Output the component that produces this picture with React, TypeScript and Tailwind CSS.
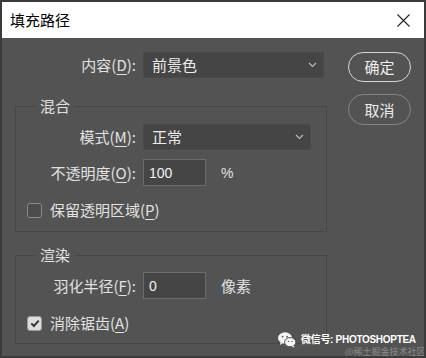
import React from "react";

function Key({ k }: { k: string }) {
  return (
    <>
      (<span className="underline underline-offset-[3px] decoration-1">{k}</span>)
    </>
  );
}

function Chevron() {
  return (
    <svg width="9" height="6" viewBox="0 0 9 6" fill="none">
      <polyline points="1,1 4.5,4.5 8,1" stroke="#bdbdbd" strokeWidth="1.1" />
    </svg>
  );
}

function Select({ value, width }: { value: string; width: string }) {
  return (
    <div
      className={`${width} h-[26px] bg-[#454545] border border-[#4a4a4a] flex items-center justify-between pl-[8px] pr-[6px] text-[#ececec]`}
    >
      <span>{value}</span>
      <Chevron />
    </div>
  );
}

function NumInput({ value }: { value: string }) {
  return (
    <div className="w-[63px] h-[27px] bg-[#454545] border border-[#6c6c6c] flex items-center pl-[5px] text-[#f2f2f2] font-['Liberation_Sans',sans-serif] text-[14px]">
      {value}
    </div>
  );
}

function Check({ checked, children }: { checked?: boolean; children: React.ReactNode }) {
  return (
    <div className="flex items-center h-[20px] pl-[11px]">
      {checked ? (
        <div className="w-[15px] h-[15px] rounded-[3px] bg-[#dedede] border border-[#9a9a9a] flex items-center justify-center">
          <svg width="10" height="9" viewBox="0 0 10 9" fill="none">
            <polyline points="1.3,4.6 3.9,7 8.7,1.6" stroke="#3a3a3a" strokeWidth="2" />
          </svg>
        </div>
      ) : (
        <div className="w-[15px] h-[15px] rounded-[3px] bg-[#4b4b4b] border border-[#8a8a8a]" />
      )}
      <span className="ml-[8px]">{children}</span>
    </div>
  );
}

export default function App() {
  return (
    <div className="w-[426px] h-[358px] border-2 border-[#3b3b3b] bg-[#535353] flex flex-col overflow-hidden relative font-['Noto_Sans_CJK_SC','Noto_Sans',sans-serif] text-[15px] leading-[20px] text-[#e2e2e2]">
      {/* Title bar */}
      <div className="h-[36px] bg-white flex items-center justify-between pl-[8px] pr-[14px] shrink-0">
        <span className="text-black text-[15px]">填充路径</span>
        <svg width="13" height="13" viewBox="0 0 13 13" fill="none">
          <line x1="0.5" y1="0.5" x2="12.5" y2="12.5" stroke="#222" strokeWidth="1.1" />
          <line x1="12.5" y1="0.5" x2="0.5" y2="12.5" stroke="#222" strokeWidth="1.1" />
        </svg>
      </div>

      {/* Body */}
      <div className="flex pt-[14px] pl-[13px]">
        <div className="w-[312px] flex flex-col">
          <div className="flex items-center">
            <div className="w-[122px] text-right pr-[1px]">
              内容<Key k="D" />:
            </div>
            <div className="ml-[6px]">
              <Select value="前景色" width="w-[181px]" />
            </div>
          </div>

          <fieldset className="mt-[18px] border border-[#474747] pb-[11px]">
            <legend className="ml-[20px] px-[4px] leading-[20px]">混合</legend>
            <div className="flex items-center mt-[8px]">
              <div className="w-[121px] text-right pr-[1px]">
                模式<Key k="M" />:
              </div>
              <div className="ml-[6px]">
                <Select value="正常" width="w-[168px]" />
              </div>
            </div>
            <div className="flex items-center mt-[9px]">
              <div className="w-[121px] text-right pr-[1px]">
                不透明度<Key k="O" />:
              </div>
              <div className="ml-[6px]">
                <NumInput value="100" />
              </div>
              <span className="ml-[15px] font-['Liberation_Sans',sans-serif] text-[14px]">%</span>
            </div>
            <div className="mt-[14px]">
              <Check>
                保留透明区域<Key k="P" />
              </Check>
            </div>
          </fieldset>

          <fieldset className="mt-[13px] border border-[#474747] pb-[10px]">
            <legend className="ml-[20px] px-[4px] leading-[20px]">渲染</legend>
            <div className="flex items-center mt-[7px]">
              <div className="w-[121px] text-right pr-[1px]">
                羽化半径<Key k="F" />:
              </div>
              <div className="ml-[6px]">
                <NumInput value="0" />
              </div>
              <span className="ml-[15px]">像素</span>
            </div>
            <div className="mt-[14px]">
              <Check checked>
                消除锯齿<Key k="A" />
              </Check>
            </div>
          </fieldset>
        </div>

        {/* Buttons */}
        <div className="ml-[21px] flex flex-col">
          <button className="w-[63px] h-[30px] rounded-full border-[1.5px] border-[#d6d6d6] text-[#f0f0f0] text-[15px] flex items-center justify-center">
            确定
          </button>
          <button className="mt-[12px] w-[63px] h-[31px] rounded-full border border-[#858585] text-[#eaeaea] text-[15px] flex items-center justify-center">
            取消
          </button>
        </div>
      </div>

      {/* Watermark */}
      <div className="absolute left-[276px] top-[329px] flex items-center whitespace-nowrap text-white">
        <svg width="18" height="16" viewBox="0 0 18 16">
          <ellipse cx="7" cy="6" rx="7" ry="5.8" fill="#f5f5f5" />
          <path d="M2.5 10 L2 13 L5 11 Z" fill="#f5f5f5" />
          <ellipse cx="12.2" cy="10.2" rx="5.6" ry="4.6" fill="#f5f5f5" stroke="#535353" strokeWidth="1" />
          <path d="M15.5 13.5 L16.5 15.8 L13.8 14.4 Z" fill="#f5f5f5" />
          <circle cx="4.6" cy="4.6" r="0.9" fill="#535353" />
          <circle cx="9.2" cy="4.6" r="0.9" fill="#535353" />
          <circle cx="10.4" cy="9.4" r="0.7" fill="#535353" />
          <circle cx="14" cy="9.4" r="0.7" fill="#535353" />
        </svg>
        <span className="ml-[5px] text-[10px] font-bold leading-[16px] tracking-[-0.3px]">
          微信号<span className="font-['Liberation_Sans',sans-serif]">: PHOTOSHOPTEA</span>
        </span>
      </div>
      <div className="absolute left-[343px] top-[344px] whitespace-nowrap text-[9px] leading-[11px] text-[#8a8a8a]">
        @稀土掘金技术社区
      </div>
    </div>
  );
}
